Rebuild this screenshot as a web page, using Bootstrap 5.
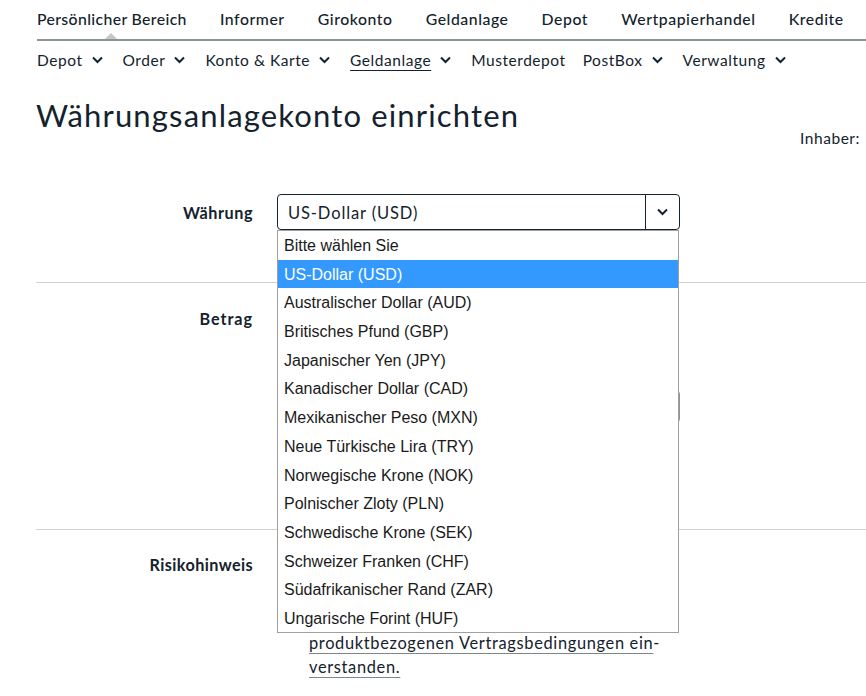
<!DOCTYPE html>
<html lang="de"><head><meta charset="utf-8"><title>Währungsanlagekonto einrichten</title>
<link href="https://cdn.jsdelivr.net/npm/bootstrap@5.3.0/dist/css/bootstrap.min.css" rel="stylesheet">
<style>
html,body{height:696px;overflow:hidden}
body{font-family:Lato,"Noto Sans",sans-serif;color:#13222c;background:#fff;font-size:16px;letter-spacing:.55px}
.main-nav{margin-left:37px;height:41px;border-bottom:2px solid #8d9496;gap:33.1px;position:relative}
.main-nav a{color:#13222c;text-decoration:none;font-size:15.8px;font-weight:500;line-height:38px}
.main-nav a:first-child{letter-spacing:.37px}
.tri{position:absolute;left:68px;bottom:0;width:0;height:0;border-left:6px solid transparent;border-right:6px solid transparent;border-bottom:6px solid #c4c8c9}
.sub-nav{margin-left:37px;height:37px}
.sub-nav a{color:#13222c;text-decoration:none;font-size:15.5px;line-height:38px}
.sub-nav svg{width:11px;height:8px;margin-left:9px;margin-right:20px}
.sub-nav a.cur{text-decoration:underline;text-underline-offset:4px;text-decoration-thickness:1px}
.sub-nav .solo{margin-right:17px}
h1{font-family:Lato,sans-serif;font-size:31px;font-weight:400;line-height:30px;margin:22px 0 0 36px;letter-spacing:1.15px}
.owner{text-align:right;padding-right:6px;font-size:15.5px;line-height:20px;margin-top:-2px}
.frow{margin-left:36px;position:relative}
.flabel{width:217px;text-align:right;font-weight:700;font-size:16.2px;line-height:20px;flex:none}
.flabel.tight{letter-spacing:.4px}
.flabel.wide{letter-spacing:.95px}
.r1{margin-top:46px;height:88px}
.r2{height:247px;border-top:1px solid #cfd1d2}
.r3{border-top:1px solid #cfd1d2}
.fsel{margin-left:24px;width:403px;height:36px;border:1px solid #13252f;border-radius:4px;display:flex;align-items:stretch;font-size:16.5px;letter-spacing:.88px}
.fsel span{flex:1;padding-left:10px;line-height:36px}
.fsel i{width:34px;border-left:1px solid #13252f;display:flex;align-items:center;justify-content:center}
.dropdown-list{position:absolute;left:241px;top:36px;width:402px;height:403px;background:#fff;border:1px solid #a0a0a0;z-index:5;font-family:"Liberation Sans",Arial,sans-serif;font-size:16px;letter-spacing:0;color:#1a1a1a}
.dropdown-list div{height:28.7px;line-height:28.7px;padding-left:6px;padding-top:1px;white-space:nowrap}
.dropdown-list div.sel{background:#3399ff;color:#fff}
.finput{margin-left:24px;margin-top:107px;width:403px;height:33px;border:1px solid #8d9496;border-radius:4px}
.risk{margin-left:56px;padding-top:101px;font-size:16.4px;line-height:24px;letter-spacing:.67px}
.risk a{color:#13222c;text-decoration:underline;text-decoration-color:#7d878b;text-underline-offset:4px;text-decoration-thickness:1px}
.lb1{padding-top:9px}.lb2{padding-top:26px}.lb3{padding-top:25px}
</style></head><body>
<nav class="main-nav d-flex">
<a href="#">Persönlicher Bereich</a><a href="#">Informer</a><a href="#">Girokonto</a><a href="#">Geldanlage</a><a href="#">Depot</a><a href="#">Wertpapierhandel</a><a href="#">Kredite</a>
<span class="tri"></span>
</nav>
<nav class="sub-nav d-flex align-items-center">
<a href="#">Depot</a><svg viewBox="0 0 11 8"><path d="M1 1.5 5.5 6 10 1.5" fill="none" stroke="#13222c" stroke-width="2"/></svg>
<a href="#">Order</a><svg viewBox="0 0 11 8"><path d="M1 1.5 5.5 6 10 1.5" fill="none" stroke="#13222c" stroke-width="2"/></svg>
<a href="#">Konto &amp; Karte</a><svg viewBox="0 0 11 8"><path d="M1 1.5 5.5 6 10 1.5" fill="none" stroke="#13222c" stroke-width="2"/></svg>
<a href="#" class="cur">Geldanlage</a><svg viewBox="0 0 11 8"><path d="M1 1.5 5.5 6 10 1.5" fill="none" stroke="#13222c" stroke-width="2"/></svg>
<a href="#" class="solo">Musterdepot</a>
<a href="#">PostBox</a><svg viewBox="0 0 11 8"><path d="M1 1.5 5.5 6 10 1.5" fill="none" stroke="#13222c" stroke-width="2"/></svg>
<a href="#">Verwaltung</a><svg viewBox="0 0 11 8"><path d="M1 1.5 5.5 6 10 1.5" fill="none" stroke="#13222c" stroke-width="2"/></svg>
</nav>
<h1>Währungsanlagekonto einrichten</h1>
<div class="owner">Inhaber:</div>
<div class="frow r1 d-flex">
<div class="flabel lb1">Währung</div>
<div class="fsel"><span>US-Dollar (USD)</span><i><svg width="11" height="8" viewBox="0 0 11 8"><path d="M1 1.5 5.5 6 10 1.5" fill="none" stroke="#13222c" stroke-width="2"/></svg></i></div>
<div class="dropdown-list">
<div>Bitte wählen Sie</div><div class="sel">US-Dollar (USD)</div><div>Australischer Dollar (AUD)</div><div>Britisches Pfund (GBP)</div><div>Japanischer Yen (JPY)</div><div>Kanadischer Dollar (CAD)</div><div>Mexikanischer Peso (MXN)</div><div>Neue Türkische Lira (TRY)</div><div>Norwegische Krone (NOK)</div><div>Polnischer Zloty (PLN)</div><div>Schwedische Krone (SEK)</div><div>Schweizer Franken (CHF)</div><div>Südafrikanischer Rand (ZAR)</div><div>Ungarische Forint (HUF)</div>
</div>
</div>
<div class="frow r2 d-flex">
<div class="flabel lb2 wide">Betrag</div>
<div class="finput"></div>
</div>
<div class="frow r3 d-flex">
<div class="flabel lb3 tight">Risikohinweis</div>
<div class="risk"><a href="#">produktbezogenen Vertragsbedingungen ein</a>-<br><a href="#">verstanden.</a></div>
</div>
</body></html>
